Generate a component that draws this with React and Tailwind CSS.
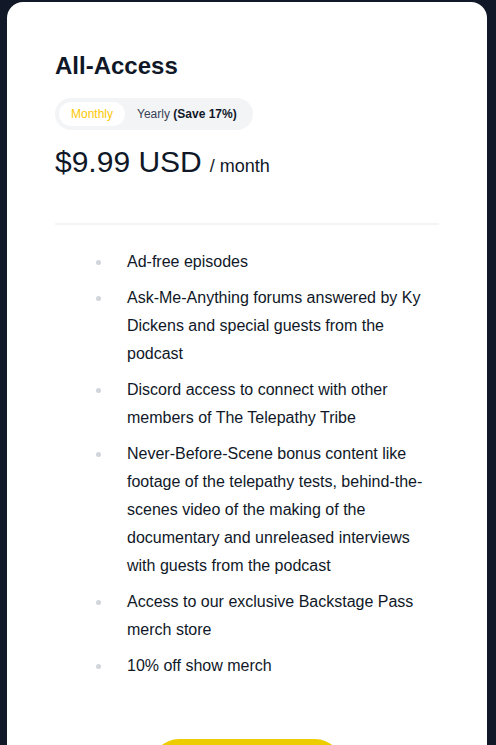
import { useState } from 'react';

const perks = [
  'Ad-free episodes',
  'Ask-Me-Anything forums answered by Ky Dickens and special guests from the podcast',
  'Discord access to connect with other members of The Telepathy Tribe',
  'Never-Before-Scene bonus content like footage of the telepathy tests, behind-the-scenes video of the making of the documentary and unreleased interviews with guests from the podcast',
  'Access to our exclusive Backstage Pass merch store',
  '10% off show merch',
];

const App = () => {
  const [yearly, setYearly] = useState(false);

  return (
    <div className="min-h-[745px] bg-[#111827] pt-[2px] font-['Liberation_Sans',Arial,sans-serif]">
      <div className="ml-[7px] w-[480px] bg-white rounded-2xl px-12 pt-12 pb-10">
        {/* Plan name */}
        <h2 className="text-2xl font-bold text-gray-900">All-Access</h2>

        {/* Billing toggle */}
        <div className="mt-4 inline-flex items-center p-1 rounded-full bg-gray-100">
          <button
            onClick={() => setYearly(false)}
            className={`h-6 px-3 rounded-full text-xs ${!yearly ? 'bg-white text-yellow-400' : 'text-gray-700'}`}
          >
            Monthly
          </button>
          <button
            onClick={() => setYearly(true)}
            className={`h-6 px-3 rounded-full text-xs ${yearly ? 'bg-white text-yellow-400' : 'text-gray-700'}`}
          >
            Yearly <span className="font-bold text-gray-900">(Save 17%)</span>
          </button>
        </div>

        {/* Price */}
        <div className="mt-[14px] flex items-baseline gap-2 text-gray-900">
          <span className="text-3xl">{yearly ? '$99.99 USD' : '$9.99 USD'}</span>
          <span className="text-lg">/ {yearly ? 'year' : 'month'}</span>
        </div>

        <div className="mt-[43px] h-[2px] bg-gray-100" />

        {/* Perks */}
        <ul className="mt-[23px] ml-10 space-y-2">
          {perks.map((perk) => (
            <li key={perk} className="flex text-base leading-7 text-gray-900">
              <span className="w-8 h-7 shrink-0 flex items-center">
                <span className="ml-px w-[5px] h-[5px] rounded-full bg-gray-300" />
              </span>
              <span>{perk}</span>
            </li>
          ))}
        </ul>

        {/* Call to action */}
        <div className="mt-[59px] flex justify-center">
          <button className="w-[192px] h-14 rounded-full bg-[#eecd00] text-gray-900 font-bold text-base">
            Join Now
          </button>
        </div>
      </div>
    </div>
  );
};

export default App;
